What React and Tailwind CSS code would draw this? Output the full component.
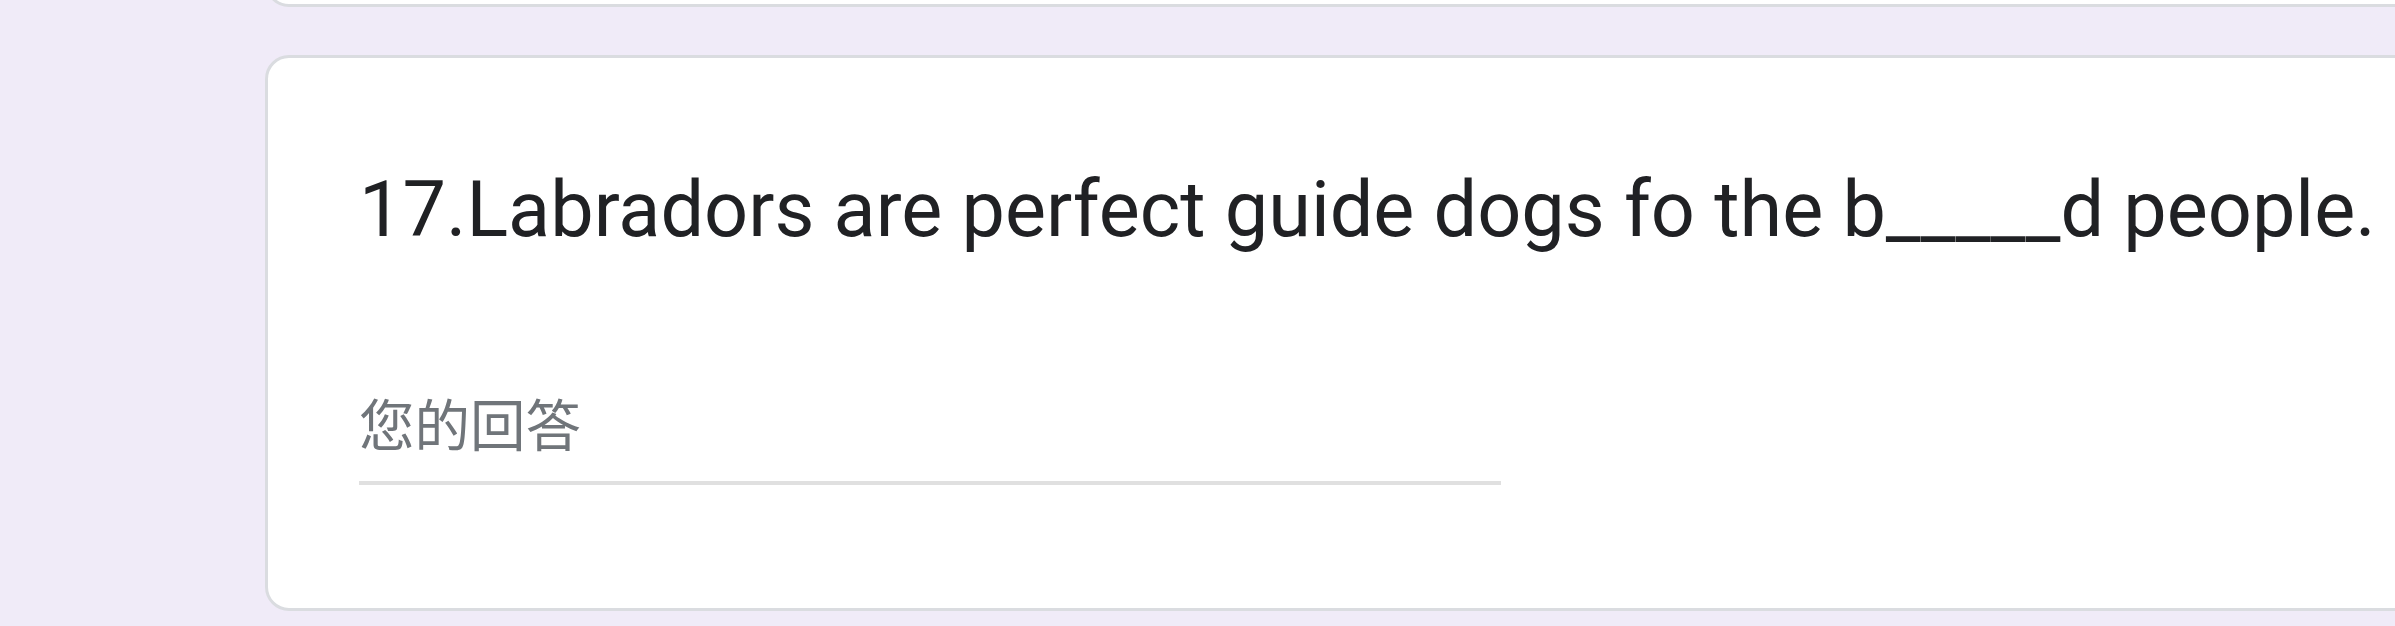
export default function App() {
  return (
    <div className="h-[626px] w-full overflow-hidden bg-[#f0ebf8] font-['Roboto','Noto_Sans_CJK_SC',sans-serif]">
      <div className="ml-[265px] flex w-[2300px] flex-col gap-[48px]">
        {/* previous question card, only its bottom edge shows */}
        <div className="-mt-[100px] h-[107px] rounded-[24px] border-[3px] border-[#dadce0] bg-white" />

        {/* question 17 */}
        <div className="h-[556px] rounded-[24px] border-[3px] border-[#dadce0] bg-white pl-[91px] pt-[113px]">
          <div className="whitespace-nowrap text-[77.4px] leading-none text-[#202124]">
            17.Labradors are perfect guide dogs fo the b_____d people.
          </div>
          <div className="mt-[152px] w-[1142px] border-b-[4px] border-[#e0e0e0] pb-[25px]">
            <span className="block text-[55.5px] leading-none text-[#70757a]">您的回答</span>
          </div>
        </div>
      </div>
    </div>
  );
}
